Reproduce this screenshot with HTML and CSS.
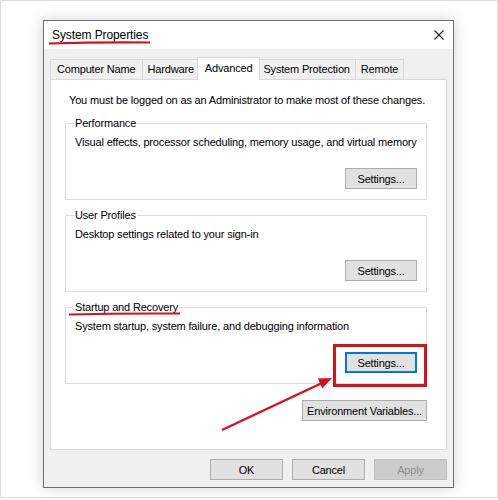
FILE: index.html
```html
<!DOCTYPE html>
<html lang="en">
<head>
    <meta charset="UTF-8">
    <meta name="viewport" content="width=device-width, initial-scale=1.0">
    <title>System Properties</title>
    <link rel="stylesheet" href="styles.css">
</head>
<body>
    <div class="page">
        <div class="dialog">
            <div class="titlebar">
                <span class="title">System Properties</span>
                <svg class="close" width="10" height="10" viewBox="0 0 10 10">
                    <path d="M0.5 0.5 L9.5 9.5 M9.5 0.5 L0.5 9.5" stroke="#222" stroke-width="1.1" fill="none"/>
                </svg>
            </div>
            <div class="content">
                <div class="tabs">
                    <div class="tab">Computer Name</div>
                    <div class="tab">Hardware</div>
                    <div class="tab active">Advanced</div>
                    <div class="tab">System Protection</div>
                    <div class="tab">Remote</div>
                </div>
                <div class="panel">
                    <p class="note">You must be logged on as an Administrator to make most of these changes.</p>

                    <fieldset class="group">
                        <legend>Performance</legend>
                        <p class="desc">Visual effects, processor scheduling, memory usage, and virtual memory</p>
                        <div class="actions"><button class="btn">Settings...</button></div>
                    </fieldset>

                    <fieldset class="group">
                        <legend>User Profiles</legend>
                        <p class="desc">Desktop settings related to your sign-in</p>
                        <div class="actions"><button class="btn">Settings...</button></div>
                    </fieldset>

                    <fieldset class="group">
                        <legend>Startup and Recovery</legend>
                        <p class="desc">System startup, system failure, and debugging information</p>
                        <div class="actions"><button class="btn focused">Settings...</button></div>
                    </fieldset>

                    <div class="env">
                        <button class="btn wide">Environment Variables...</button>
                    </div>
                </div>
                <div class="footer">
                    <button class="btn">OK</button>
                    <button class="btn">Cancel</button>
                    <button class="btn disabled">Apply</button>
                </div>
            </div>
        </div>
    </div>

    <!-- red annotations drawn over the screenshot -->
    <svg class="marks" width="498" height="500" viewBox="0 0 498 500">
        <path d="M49 43.5 Q100 42 150 42.5" stroke="#d8101c" stroke-width="2.2" fill="none"/>
        <path d="M69 314.5 Q125 313 180 313.5" stroke="#d8101c" stroke-width="2" fill="none"/>
        <rect x="334.5" y="345.5" width="91" height="40" stroke="#d8101c" stroke-width="3" fill="none"/>
        <line x1="222" y1="430" x2="322" y2="383" stroke="#d8101c" stroke-width="2.4"/>
        <polygon points="332,378 322.4,388.6 317.8,378.6" fill="#d8101c"/>
    </svg>
</body>
</html>
```

FILE: styles.css
```css
body {
    margin: 0;
    font-family: "Liberation Sans", Arial, sans-serif;
    font-size: 11px;
    letter-spacing: -0.17px;
    color: #000;
    background: #fff;
}

.page {
    width: 498px;
    height: 498px;
    box-sizing: border-box;
    border: 1px solid #dedede;
    padding: 19px 0 0 42px;
}

.dialog {
    width: 411px;
    height: 468px;
    box-sizing: border-box;
    border: 1px solid #6e6e6e;
    background: #f0f0f0;
    box-shadow: 0 0 14px rgba(0, 0, 0, 0.18);
    display: flex;
    flex-direction: column;
}

.titlebar {
    height: 28px;
    background: #fff;
    display: flex;
    align-items: center;
    justify-content: space-between;
    padding: 0 9px 0 8px;
}

.title {
    font-size: 12px;
    letter-spacing: -0.1px;
}

.content {
    padding: 8px 6px 7px 6px;
}

.tabs {
    display: flex;
    align-items: flex-end;
    height: 22px;
}

.tab {
    height: 20px;
    line-height: 19px;
    box-sizing: border-box;
    padding: 0 5px;
    border: 1px solid #d9d9d9;
    border-bottom: none;
    margin-left: -1px;
    background: #f0f0f0;
    white-space: nowrap;
}

.tab:first-child {
    margin-left: 0;
    padding: 0 6px;
}

.tab.active {
    height: 23px;
    line-height: 20px;
    background: #fff;
    margin: 0 -2px -1px -3px;
    padding: 0 7px;
    position: relative;
    z-index: 1;
}

.panel {
    height: 371px;
    box-sizing: border-box;
    background: #fff;
    border: 1px solid #d9d9d9;
    padding-top: 13px;
}

.note {
    margin: 0 0 9px 18px;
    line-height: 14px;
    white-space: nowrap;
}

.group {
    margin: 0 19px 8px 14px;
    padding: 5px 9px 10px 9px;
    border: 1px solid #dcdcdc;
}

.group legend {
    padding: 0 1px;
    margin-left: -1px;
    line-height: 14px;
}

.desc {
    margin: 0;
    line-height: 14px;
    white-space: nowrap;
}

.actions {
    display: flex;
    justify-content: flex-end;
    margin-top: 19px;
}

.btn {
    width: 72px;
    height: 21px;
    box-sizing: border-box;
    border: 1px solid #adadad;
    background: #e1e1e1;
    font-family: inherit;
    font-size: 11px;
    letter-spacing: inherit;
    color: #000;
    padding: 0;
}

.btn.focused {
    border: 2px solid #0078d7;
}

.btn.wide {
    width: 125px;
}

.btn.disabled {
    background: #cccccc;
    border-color: #bfbfbf;
    color: #8d8d8d;
}

.env {
    display: flex;
    justify-content: flex-end;
    margin: 16px 19px 0 0;
}

.footer {
    display: flex;
    justify-content: flex-end;
    gap: 9px;
    padding-top: 9px;
}

.footer .btn {
    width: 73px;
}

.marks {
    position: absolute;
    top: 0;
    left: 0;
    pointer-events: none;
}
```
